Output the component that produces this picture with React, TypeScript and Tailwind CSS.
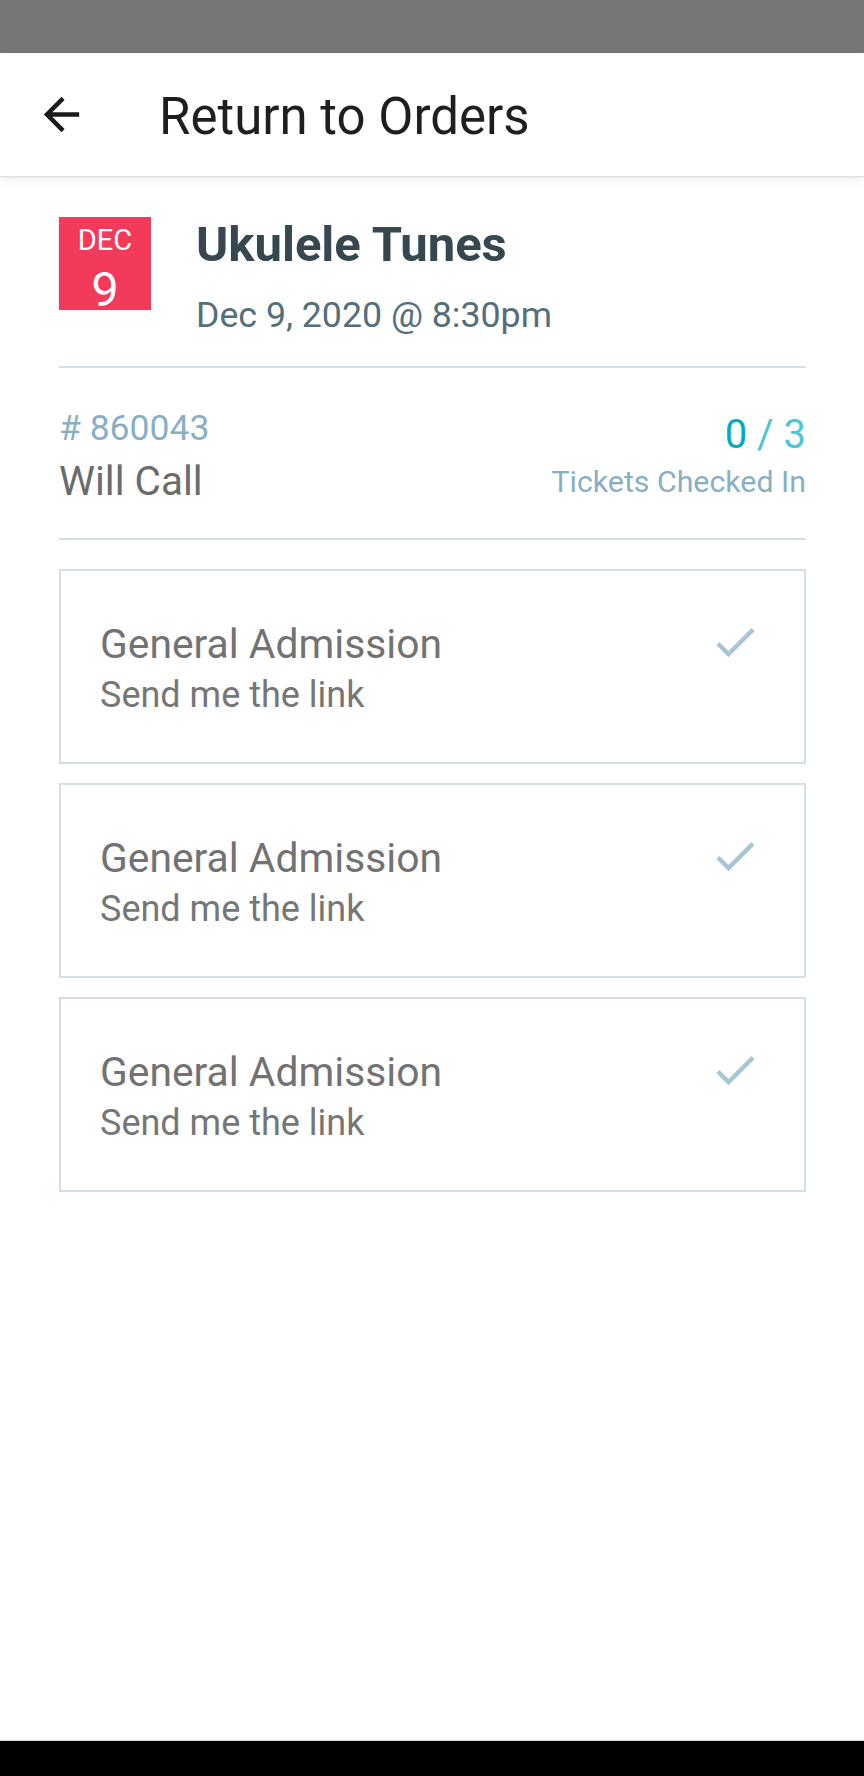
import React from 'react';

const tickets = [
  { name: 'General Admission', note: 'Send me the link' },
  { name: 'General Admission', note: 'Send me the link' },
  { name: 'General Admission', note: 'Send me the link' },
];

const BackArrow = () => (
  <svg viewBox="0 0 24 24" className="w-[53px] h-[53px]" fill="#1a1a1a">
    <path d="M20 11H7.83l5.59-5.59L12 4l-8 8 8 8 1.41-1.41L7.83 13H20v-2z" />
  </svg>
);

const Check = () => (
  <svg viewBox="0 0 24 24" className="w-[52px] h-[52px] shrink-0" fill="#a7c5d3">
    <path d="M9 16.17L4.83 12l-1.42 1.41L9 19 21 7l-1.41-1.41z" />
  </svg>
);

const TicketCard = ({ name, note }: { name: string; note: string }) => (
  <div className="h-[195px] border-2 border-[#d2dfe7] flex justify-between pl-[39px] pr-[43px]">
    <div className="flex flex-col pt-[49px]">
      <div className="text-[40.8px] leading-[48px] text-[#727272]">{name}</div>
      <div className="text-[36px] leading-[42px] mt-[6px] text-[#767676]">{note}</div>
    </div>
    <div className="pt-[45px]">
      <Check />
    </div>
  </div>
);

export default function App() {
  return (
    <div className="min-h-[1776px] flex flex-col bg-white font-['Roboto',sans-serif]">
      <div className="h-[53px] bg-[#767676]" />

      <header className="relative z-10 h-[123px] bg-white flex items-center shadow-[0_1px_2px_rgba(0,0,0,0.12),0_4px_12px_rgba(0,0,0,0.06)]">
        <div className="ml-[35px]">
          <BackArrow />
        </div>
        <h1 className="ml-[71px] mt-[5px] text-[51px] leading-[60px] text-[#1f1f1f]">Return to Orders</h1>
      </header>

      <main className="flex-1 pl-[59px] pr-[58px]">
        <div className="flex pt-[41px]">
          <div className="w-[92px] h-[93px] bg-[#f43a5b] flex flex-col items-center pt-[8px] text-white">
            <div className="text-[29px] leading-[30px]">DEC</div>
            <div className="text-[49px] leading-[40px] mt-[15px]">9</div>
          </div>
          <div className="ml-[45px] flex flex-col">
            <div className="text-[49px] leading-[56px] font-bold text-[#37474f]">Ukulele Tunes</div>
            <div className="text-[35.7px] leading-[44px] mt-[20px] text-[#546e7a]">Dec 9, 2020 @ 8:30pm</div>
          </div>
        </div>

        <div className="mt-[29px] h-[2px] bg-[#d2dfe7]" />

        <div className="h-[170px] flex justify-between items-start">
          <div className="flex flex-col pt-[40px]">
            <div className="text-[35.5px] leading-[40px] text-[#88afc4]"># 860043</div>
            <div className="text-[40.5px] leading-[46px] mt-[10px] text-[#6b6b6b]">Will Call</div>
          </div>
          <div className="flex flex-col items-end pt-[44px]">
            <div className="text-[40px] leading-[46px]">
              <span className="text-[#00acc1]">0</span>
              <span className="text-[#4cc6d6]"> / 3</span>
            </div>
            <div className="text-[30.3px] leading-[36px] mt-[6px] text-[#88afc4]">Tickets Checked In</div>
          </div>
        </div>

        <div className="h-[2px] bg-[#d2dfe7]" />

        <div className="mt-[29px] flex flex-col gap-[19px]">
          {tickets.map((t, i) => (
            <TicketCard key={i} name={t.name} note={t.note} />
          ))}
        </div>
      </main>

      <div className="h-[36px] bg-black border-t border-[#d9d9d9]" />
    </div>
  );
}
